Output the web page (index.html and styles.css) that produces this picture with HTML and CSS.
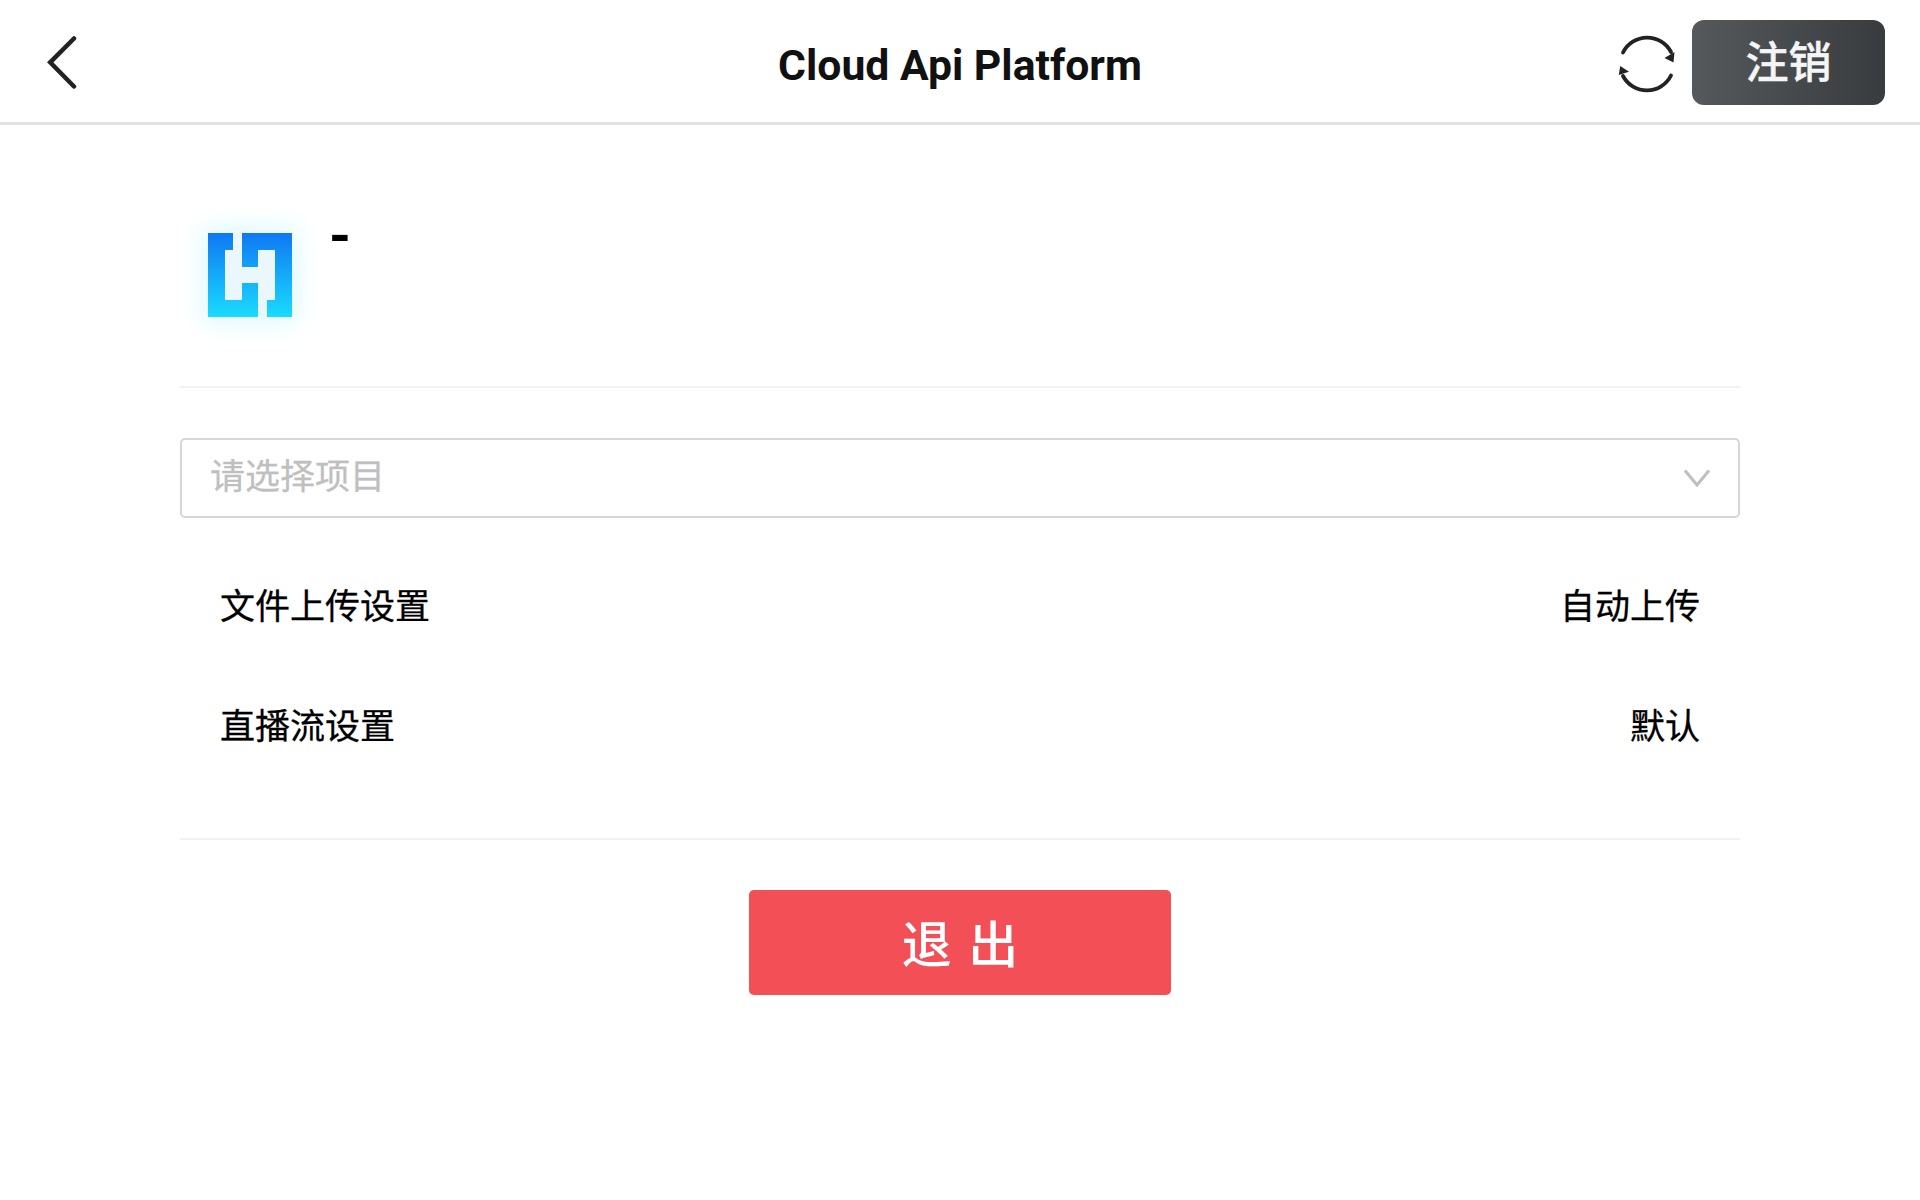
FILE: index.html
```html
<!DOCTYPE html>
<html lang="zh-CN">
<head>
    <meta charset="UTF-8">
    <meta name="viewport" content="width=device-width, initial-scale=1.0">
    <title>Cloud Api Platform</title>
    <link rel="stylesheet" href="styles.css">
</head>
<body>
    <header class="top-bar">
        <div class="top-left">
            <svg class="back-icon" width="30" height="56" viewBox="0 0 30 56">
                <path d="M27 4.500 L3.200 28.300 L27 52.500" fill="none" stroke="#222" stroke-width="4.500" stroke-linecap="round" stroke-linejoin="miter"/>
            </svg>
        </div>
        <h1 class="title">Cloud Api Platform</h1>
        <div class="top-right">
            <svg class="refresh-icon" width="60" height="60" viewBox="0 0 60 60">
                <path d="M6 18.500 A27 27 0 0 1 54 18" fill="none" stroke="#222" stroke-width="3.800" stroke-linecap="round"/>
                <path d="M54 41.500 A27 27 0 0 1 6 42" fill="none" stroke="#222" stroke-width="3.800" stroke-linecap="round"/>
                <polygon points="47.500,24 57.500,18 56.500,28.500" fill="#222"/>
                <polygon points="1.800,41 3.200,32 12,37.700" fill="#222"/>
            </svg>
            <button class="logout-btn">注销</button>
        </div>
    </header>

    <main class="content">
        <section class="profile">
            <div class="logo">
                <svg width="84" height="84" viewBox="0 0 84 84">
                    <defs>
                        <linearGradient id="logoFill" x1="0" y1="0" x2="0" y2="1">
                            <stop offset="0" stop-color="#0f78f4"/>
                            <stop offset="1" stop-color="#1adcff"/>
                        </linearGradient>
                    </defs>
                    <path fill="url(#logoFill)" d="M0 0 H25 V17 H17 V67 H34 V50 H50 V84 H0 Z"/>
                    <path fill="url(#logoFill)" d="M34 0 H84 V84 H59 V67 H67 V17 H50 V34 H34 Z"/>
                </svg>
            </div>
            <div class="user-name">-</div>
        </section>

        <section class="settings">
            <div class="project-select">
                <span class="placeholder">请选择项目</span>
                <svg width="26" height="18" viewBox="0 0 26 18">
                    <path d="M1 1.500 L13 16 L25 1.500" fill="none" stroke="#bfbfbf" stroke-width="3"/>
                </svg>
            </div>
            <div class="setting-row">
                <span>文件上传设置</span>
                <span>自动上传</span>
            </div>
            <div class="setting-row">
                <span>直播流设置</span>
                <span>默认</span>
            </div>
        </section>

        <div class="exit-wrap">
            <button class="exit-btn">退 出</button>
        </div>
    </main>
</body>
</html>
```

FILE: styles.css
```css
* {
    box-sizing: border-box;
}
body {
    margin: 0;
    background: white;
    color: #111;
    font-family: Roboto, "Noto Sans CJK SC", sans-serif;
}
button {
    border: none;
    font-family: inherit;
    cursor: pointer;
}
.top-bar {
    display: grid;
    grid-template-columns: 1fr auto 1fr;
    align-items: center;
    height: 125px;
    padding: 3px 35px 0;
    border-bottom: 3px solid #e3e3e3;
}
.back-icon {
    display: block;
    margin: -2px 0 0 12px;
}
.title {
    margin: 4px 0 0;
    font-size: 42.700px;
    font-weight: 700;
    color: #111;
}
.top-right {
    display: flex;
    justify-content: flex-end;
    align-items: center;
    gap: 15px;
}
.refresh-icon {
    display: block;
    margin-top: 3px;
}
.logout-btn {
    width: 193px;
    height: 85px;
    padding: 0 0 8px;
    border-radius: 12px;
    background: linear-gradient(90deg, #55595c, #393c3f);
    color: #f5f5f5;
    font-size: 43px;
    font-weight: 500;
    -webkit-text-stroke: 0.5px #f5f5f5;
}
.content {
    padding: 0 180px;
}
.profile {
    display: flex;
    align-items: flex-start;
    height: 263px;
    padding: 108px 0 0 28px;
    border-bottom: 2px solid #f2f2f2;
}
.logo {
    width: 84px;
    height: 84px;
    background: #eaf7fd;
    box-shadow: 0 0 24px 5px #dcf8ff;
}
.logo svg {
    display: block;
}
.user-name {
    margin: -30px 0 0 37px;
    font-size: 56px;
    line-height: 66px;
    font-weight: 700;
    color: #000;
}
.settings {
    height: 452px;
    padding-top: 50px;
    border-bottom: 2px solid #f2f2f2;
}
.project-select {
    display: flex;
    justify-content: space-between;
    align-items: center;
    height: 80px;
    padding: 0 28px 0 28px;
    border: 2px solid #d6d6d6;
    border-radius: 5px;
}
.placeholder {
    margin-top: -9px;
    font-size: 35px;
    font-weight: 400;
    -webkit-text-stroke: 0.3px #bfbfbf;
    color: #bfbfbf;
}
.setting-row {
    display: flex;
    justify-content: space-between;
    align-items: center;
    height: 120px;
    padding: 0 40px;
    font-size: 35px;
    font-weight: 400;
    -webkit-text-stroke: 0.3px #000;
    color: #000;
}
.setting-row span {
    margin-top: -6px;
}
.project-select + .setting-row {
    margin-top: 28px;
}
.exit-wrap {
    display: flex;
    justify-content: center;
    padding-top: 50px;
}
.exit-btn {
    width: 422px;
    height: 105px;
    padding: 0 0 4px;
    border-radius: 5px;
    background: #f24f57;
    box-shadow: 0 5px 0 #f2f2f2;
    color: white;
    font-size: 50px;
    font-weight: 500;
    word-spacing: 4px;
}
```
